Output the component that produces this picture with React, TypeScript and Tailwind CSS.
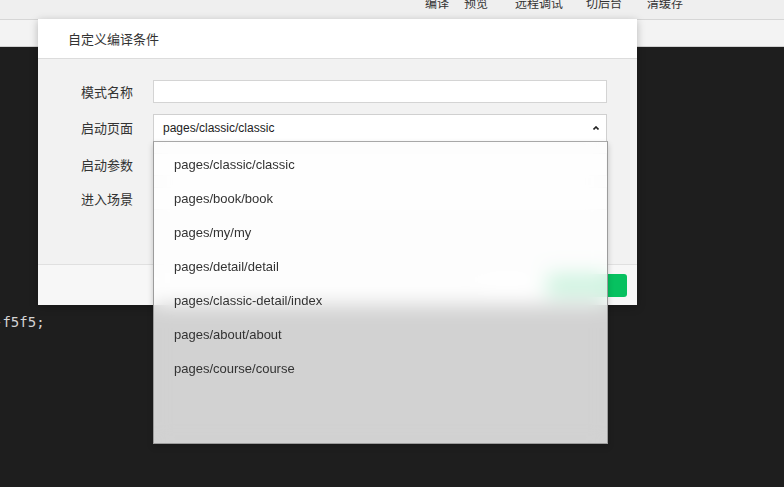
import React from 'react';

const cjk = "font-['Microsoft_YaHei','Noto_Sans_CJK_SC',sans-serif]";
const latin = "font-['Liberation_Sans','Noto_Sans_CJK_SC',sans-serif]";

export default function App() {
  const pages = [
    'pages/classic/classic',
    'pages/book/book',
    'pages/my/my',
    'pages/detail/detail',
    'pages/classic-detail/index',
    'pages/about/about',
    'pages/course/course',
  ];

  return (
    <div className={`relative h-[487px] w-[784px] overflow-hidden bg-[#1e1e1e] ${cjk}`}>
      {/* top menu bar, cut off at top */}
      <div className="flex h-[20px] overflow-hidden border-b border-[#d6d6d6] bg-[#efefef] text-[12px] leading-[12px] text-[#333]">
        <div className="-mt-[3px] ml-[425px] flex">
          <span>编译</span>
          <span className="ml-[15px]">预览</span>
          <span className="ml-[27px]">远程调试</span>
          <span className="ml-[23px]">切后台</span>
          <span className="ml-[25px]">清缓存</span>
        </div>
      </div>
      <div className="h-[27px] border-b border-[#d0d0d0] bg-[#f3f3f3]" />

      {/* editor */}
      <div className="pt-[265px] font-['DejaVu_Sans_Mono',monospace] text-[14px] leading-[20px] text-[#d4d4d4]">
        <span className="-ml-[6px] block">-f5f5;</span>
      </div>

      {/* modal */}
      <div className="absolute left-[38px] top-[19px] flex h-[286px] w-[599px] flex-col shadow-[0_2px_8px_rgba(0,0,0,0.25)]">
        <div className="flex h-[40px] items-center border-b border-[#dcdcdc] bg-white pl-[30px] text-[13px] text-[#333]">
          自定义编译条件
        </div>
        <div className="flex flex-1 flex-col gap-[11px] bg-[#f2f2f2] pl-[43px] pt-[21px] text-[13px] text-[#333]">
          <div className="flex items-center">
            <span className="w-[72px]">模式名称</span>
            <div className="h-[23px] w-[454px] border border-[#d4d4d4] bg-white" />
          </div>
          <div className="flex items-center">
            <span className="w-[72px]">启动页面</span>
            <div className="relative flex h-[28px] w-[454px] items-center border border-[#d0d0d0] bg-white pl-[9px]">
              <span className={`${latin} text-[12px] text-[#222]`}>pages/classic/classic</span>
              <svg className="absolute right-[7px] top-[11px]" width="6" height="4" viewBox="0 0 6 4">
                <path d="M0.5 3.5 L3 1 L5.5 3.5" fill="none" stroke="#222" strokeWidth="1.6" />
              </svg>
            </div>
          </div>
          <div className="flex items-center">
            <span className="w-[72px]">启动参数</span>
            <div className="h-[23px] w-[454px] border border-[#d4d4d4] bg-white" />
          </div>
          <div className="flex items-center">
            <span className="w-[72px]">进入场景</span>
            <div className="h-[23px] w-[454px] border border-[#d4d4d4] bg-white" />
          </div>
        </div>
        <div className="flex h-[41px] items-center justify-end gap-[10px] border-t border-[#e0e0e0] bg-[#f7f7f7] pr-[10px]">
          <div className="h-[23px] w-[60px] rounded-[2px] border border-[#d0d0d0] bg-white" />
          <div className="h-[23px] w-[80px] rounded-[3px] bg-[#07c160]" />
        </div>
      </div>

      {/* open select list */}
      <div className={`absolute left-[153px] top-[141px] h-[303px] w-[455px] border border-[#9c9c9c] border-t-[#a8a8a8] bg-white/80 pt-[6px] shadow-[0_3px_6px_rgba(0,0,0,0.2)] backdrop-blur-[10px] ${latin}`}>
        {pages.map((p) => (
          <div key={p} className="flex h-[34px] items-center pl-[20px] text-[13px] text-[#333]">
            {p}
          </div>
        ))}
      </div>
    </div>
  );
}
